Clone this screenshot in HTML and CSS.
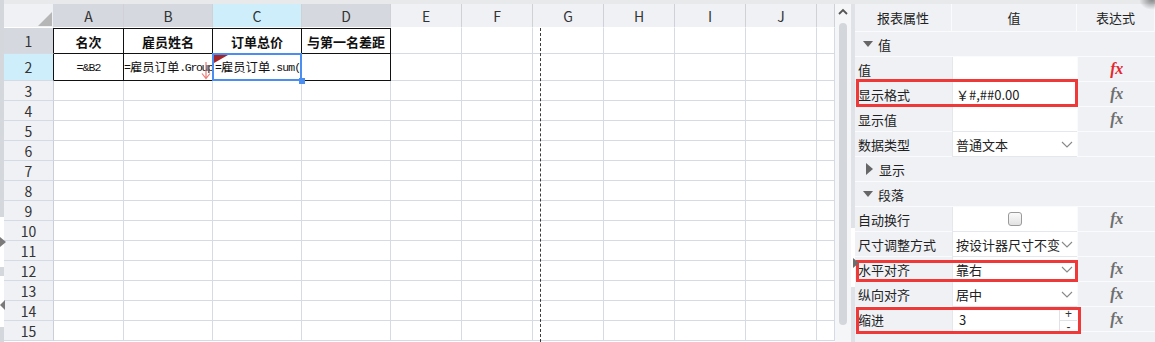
FILE: index.html
```html
<!DOCTYPE html>
<html lang="zh-CN">
<head>
<meta charset="utf-8">
<title>报表属性</title>
<link rel="stylesheet" href="styles.css">
</head>
<body>
<div class="app">
  <div class="splitter">
    <div class="seg sg1"></div>
    <div class="seg sw1"><span class="tri-r"></span></div>
    <div class="seg sg2"></div>
    <div class="seg sw2"><span class="tri-l"></span></div>
    <div class="seg sg3"></div>
  </div>

  <div class="sheet">
    <div class="row hdr">
      <div class="corner"><span class="ctri"></span></div>
      <div class="dk">A</div><div class="dk">B</div><div class="on">C</div><div class="dk">D</div>
      <div>E</div><div>F</div><div>G</div><div>H</div><div>I</div><div>J</div><div></div>
    </div>
    <div class="row r1">
      <div class="rh dk bk">1</div>
      <div class="c">名次</div><div class="c">雇员姓名</div><div class="c">订单总价</div><div class="c">与第一名差距</div>
      <div></div><div></div><div></div><div></div><div></div><div></div><div></div>
    </div>
    <div class="row r2">
      <div class="rh on bk">2</div>
      <div class="c"><span class="m">=&amp;B2</span></div>
      <div class="c left grp"><span class="m">=</span><span class="cj">雇员订单</span><span class="m tight">.Group</span><svg class="darrow" width="10" height="18" viewBox="0 0 10 18"><path d="M5 0V16M1 11.5L5 16.5L9 11.5" fill="none" stroke="#e8645f" stroke-width="1.2"/></svg></div>
      <div class="c left cur"><span class="redtri"></span><span class="m first">=</span><span class="cj">雇员订单</span><span class="m">.sum(</span><span class="selbox"></span><span class="handle"></span></div>
      <div class="c"></div>
      <div></div><div></div><div></div><div></div><div></div><div></div><div></div>
    </div>
    <div class="row"><div class="rh">3</div><div></div><div></div><div></div><div></div><div></div><div></div><div></div><div></div><div></div><div></div><div></div></div>
    <div class="row"><div class="rh">4</div><div></div><div></div><div></div><div></div><div></div><div></div><div></div><div></div><div></div><div></div><div></div></div>
    <div class="row"><div class="rh">5</div><div></div><div></div><div></div><div></div><div></div><div></div><div></div><div></div><div></div><div></div><div></div></div>
    <div class="row"><div class="rh">6</div><div></div><div></div><div></div><div></div><div></div><div></div><div></div><div></div><div></div><div></div><div></div></div>
    <div class="row"><div class="rh">7</div><div></div><div></div><div></div><div></div><div></div><div></div><div></div><div></div><div></div><div></div><div></div></div>
    <div class="row"><div class="rh">8</div><div></div><div></div><div></div><div></div><div></div><div></div><div></div><div></div><div></div><div></div><div></div></div>
    <div class="row"><div class="rh">9</div><div></div><div></div><div></div><div></div><div></div><div></div><div></div><div></div><div></div><div></div><div></div></div>
    <div class="row"><div class="rh">10</div><div></div><div></div><div></div><div></div><div></div><div></div><div></div><div></div><div></div><div></div><div></div></div>
    <div class="row"><div class="rh">11</div><div></div><div></div><div></div><div></div><div></div><div></div><div></div><div></div><div></div><div></div><div></div></div>
    <div class="row"><div class="rh">12</div><div></div><div></div><div></div><div></div><div></div><div></div><div></div><div></div><div></div><div></div><div></div></div>
    <div class="row"><div class="rh">13</div><div></div><div></div><div></div><div></div><div></div><div></div><div></div><div></div><div></div><div></div><div></div></div>
    <div class="row"><div class="rh">14</div><div></div><div></div><div></div><div></div><div></div><div></div><div></div><div></div><div></div><div></div><div></div></div>
    <div class="row"><div class="rh">15</div><div></div><div></div><div></div><div></div><div></div><div></div><div></div><div></div><div></div><div></div><div></div></div>
    <div class="pagebreak"></div>
  </div>

  <div class="vscroll">
    <svg class="up" width="10" height="7" viewBox="0 0 10 7"><path d="M1 6L5 2L9 6" fill="none" stroke="#555" stroke-width="1.8"/></svg>
    <div class="thumb"></div>
  </div>

  <div class="panel">
    <div class="pstrip">
      <div class="ps1"></div>
      <div class="ps2"><span class="ptri"></span></div>
      <div class="ps3"></div>
    </div>
    <div class="ptable">
      <div class="prow phead"><div>报表属性</div><div>值</div><div>表达式</div></div>
      <div class="psec"><span class="tdown"></span>值</div>
      <div class="prow"><div class="lbl">值</div><div class="val"></div><div class="exp"><span class="fx red">fx</span></div></div>
      <div class="prow"><div class="lbl">显示格式</div><div class="val">￥#,##0.00</div><div class="exp"><span class="fx">fx</span></div></div>
      <div class="prow"><div class="lbl">显示值</div><div class="val"></div><div class="exp"><span class="fx">fx</span></div></div>
      <div class="prow"><div class="lbl">数据类型</div><div class="val"><span class="txt">普通文本</span><svg class="chev" width="12" height="7" viewBox="0 0 12 7"><path d="M1 1L6 6L11 1" fill="none" stroke="#888" stroke-width="1.1"/></svg></div><div class="exp"></div></div>
      <div class="psec"><span class="tright"></span>显示</div>
      <div class="psec"><span class="tdown"></span>段落</div>
      <div class="prow"><div class="lbl">自动换行</div><div class="val center"><span class="check"></span></div><div class="exp"><span class="fx">fx</span></div></div>
      <div class="prow"><div class="lbl">尺寸调整方式</div><div class="val"><span class="txt">按设计器尺寸不变</span><svg class="chev" width="12" height="7" viewBox="0 0 12 7"><path d="M1 1L6 6L11 1" fill="none" stroke="#888" stroke-width="1.1"/></svg></div><div class="exp"></div></div>
      <div class="prow"><div class="lbl">水平对齐</div><div class="val"><span class="txt">靠右</span><svg class="chev" width="12" height="7" viewBox="0 0 12 7"><path d="M1 1L6 6L11 1" fill="none" stroke="#888" stroke-width="1.1"/></svg></div><div class="exp"><span class="fx">fx</span></div></div>
      <div class="prow"><div class="lbl">纵向对齐</div><div class="val"><span class="txt">居中</span><svg class="chev" width="12" height="7" viewBox="0 0 12 7"><path d="M1 1L6 6L11 1" fill="none" stroke="#888" stroke-width="1.1"/></svg></div><div class="exp"><span class="fx">fx</span></div></div>
      <div class="prow"><div class="lbl">缩进</div><div class="val num"><span class="txt">3</span><span class="spin"><span>+</span><span>-</span></span></div><div class="exp"><span class="fx">fx</span></div></div>
    </div>
    <div class="hl hl1"></div>
    <div class="hl hl2"></div>
    <div class="hl hl3"></div>
    <div class="shade"></div>
  </div>
</div>
</body>
</html>
```

FILE: styles.css
```css
* { box-sizing: border-box; margin: 0; padding: 0; }

body {
  width: 1155px;
  height: 342px;
  overflow: hidden;
  background: #e8e9eb;
  font-family: "Noto Sans CJK SC", "Noto Sans", sans-serif;
  color: #333;
}

.app {
  display: flex;
  height: 342px;
  padding-top: 4px;
}

/* left splitter */
.splitter {
  width: 4px;
  display: flex;
  flex-direction: column;
  margin-top: -4px;
  position: relative;
  z-index: 2;
}
.seg { width: 4px; }
.sg1 { height: 217px; background: #d4d7dc; }
.sw1 { height: 50px; background: #fff; display: flex; align-items: center; }
.sg2 { height: 9px; background: #d4d7dc; }
.sw2 { height: 51px; background: #fff; display: flex; align-items: center; }
.sg3 { flex: 1; background: #d4d7dc; }
.tri-r {
  width: 0; height: 0;
  border-left: 6px solid #7a7a7a;
  border-top: 5px solid transparent;
  border-bottom: 5px solid transparent;
}
.tri-l {
  width: 0; height: 0;
  margin-top: 6px;
  border-right: 5px solid #7a7a7a;
  border-top: 5px solid transparent;
  border-bottom: 5px solid transparent;
}

/* sheet */
.sheet {
  width: 831px;
  position: relative;
  background: #fff;
  overflow: hidden;
  display: flex;
  flex-direction: column;
}
.row {
  display: grid;
  grid-template-columns: 50px 70px 89px 89px 89px repeat(6, 71px) 18px;
  height: 20px;
  flex: none;
}
.row > div {
  border-right: 1px solid #d5dbe5;
  border-bottom: 1px solid #d5dbe5;
  display: flex;
  align-items: center;
  justify-content: center;
  font-size: 13px;
  overflow: hidden;
  white-space: nowrap;
  color: #222;
}
.row > .rh {
  background: #eff1f5;
  font-size: 14px;
  border-right-color: #c9ced8;
  color: #333;
}
.row > .rh.dk { background: #d5d8de; }
.row > .rh.on { background: #cdeefa; }
.row > .rh.bk { border-right-color: #111; }

.hdr { height: 24px; }
.row.hdr > div {
  background: #eff1f5;
  border-right: 1px solid #cfd1d6;
  border-bottom: 1px solid #fff;
  font-size: 14px;
  color: #333;
}
.row.hdr > .dk { background: #d5d8de; }
.row.hdr > .on { background: #cdeefa; }
.row.hdr > .corner {
  justify-content: flex-end;
  align-items: flex-end;
  padding: 0 1px 1px 0;
  border-right-color: #d5d8de;
}
.ctri {
  width: 0; height: 0;
  border-left: 14px solid transparent;
  border-bottom: 14px solid #b6b6b6;
}

.r1 { height: 26px; }
.r2 { height: 27px; }
.row > .c {
  border-right-color: #111;
  border-bottom-color: #111;
}
.r1 > .c {
  border-top: 1px solid #111;
  font-weight: bold;
  font-size: 13px;
  color: #111;
}
.row > .c.left { justify-content: flex-start; }
.row > .grp { position: relative; }
.row > .cur { overflow: visible; position: relative; }

.m {
  font-family: "Liberation Mono", monospace;
  font-size: 11.5px;
  letter-spacing: -0.9px;
  color: #111;
}
.m.tight { letter-spacing: -1.3px; }
.cj { font-size: 12.3px; color: #111; }
.darrow {
  position: absolute;
  left: 77px;
  top: 8px;
  opacity: 0.85;
}

.redtri {
  position: absolute;
  left: 1px;
  top: 1px;
  width: 0; height: 0;
  border-top: 8px solid #a3262a;
  border-right: 14px solid transparent;
}
.cur .first { margin-left: 2px; }
.selbox {
  position: absolute;
  left: -1px;
  top: -1px;
  right: -1px;
  bottom: -1px;
  border: 2px solid #4b8ef0;
  pointer-events: none;
}
.handle {
  position: absolute;
  right: -4px;
  bottom: -4px;
  width: 6px;
  height: 6px;
  background: #4b8ef0;
}

.pagebreak {
  position: absolute;
  left: 536px;
  top: 24px;
  bottom: 0;
  border-left: 1px dashed #3a3a3a;
}

/* vertical scrollbar */
.vscroll {
  width: 16px;
  background: #f5f6f8;
  display: flex;
  flex-direction: column;
  align-items: center;
}
.vscroll .up { margin-top: 4px; flex: none; }
.vscroll .thumb {
  margin-top: 8px;
  width: 8px;
  height: 302px;
  border-radius: 4px;
  background: #d3d6db;
}

/* property panel */
.panel {
  width: 304px;
  display: flex;
  background: #eff1f5;
  position: relative;
}
.pstrip {
  width: 4px;
  display: flex;
  flex-direction: column;
  position: relative;
  z-index: 1;
}
.ps1 { height: 224px; background: #dfe2e6; }
.ps2 { height: 59px; background: #fff; display: flex; align-items: center; }
.ps3 { flex: 1; background: #dfe2e6; }
.ptri {
  margin-left: 2px;
  margin-top: 10px;
  width: 0; height: 0;
  border-left: 6px solid #6d6d6d;
  border-top: 5px solid transparent;
  border-bottom: 5px solid transparent;
}

.ptable { flex: 1; font-size: 13px; color: #333; }
.prow {
  display: grid;
  grid-template-columns: 97px 125px 78px;
  height: 25px;
}
.phead { height: 28px; }
.phead > div {
  display: flex;
  align-items: center;
  justify-content: center;
  border-right: 1px solid #fafbfc;
  border-bottom: 1px solid #fafbfc;
  color: #222;
}
.psec {
  height: 25px;
  display: flex;
  align-items: center;
  padding-left: 8px;
  border-bottom: 1px solid #fafbfc;
  color: #222;
}
.tdown {
  width: 0; height: 0;
  margin-right: 5px;
  border-top: 6px solid #666;
  border-left: 5px solid transparent;
  border-right: 5px solid transparent;
}
.tright {
  width: 0; height: 0;
  margin-left: 3px;
  margin-right: 6px;
  border-left: 7px solid #666;
  border-top: 6px solid transparent;
  border-bottom: 6px solid transparent;
}
.lbl {
  display: flex;
  align-items: center;
  padding-left: 3px;
  border-bottom: 1px solid #fafbfc;
  color: #222;
  white-space: nowrap;
}
.val {
  background: #fff;
  border-left: 1px solid #e4e7eb;
  border-bottom: 1px solid #e4e7eb;
  display: flex;
  align-items: center;
  padding-left: 3px;
  padding-right: 4px;
  color: #222;
  white-space: nowrap;
  overflow: hidden;
}
.val.center { justify-content: center; padding: 0; }
.val.num { padding-left: 6px; padding-right: 0; }
.txt { overflow: hidden; flex: 0 1 auto; }
.chev { margin-left: auto; flex: none; }
.exp {
  display: flex;
  align-items: center;
  justify-content: center;
  border-left: 1px solid #fafbfc;
  border-bottom: 1px solid #fafbfc;
}
.fx {
  font-family: "Liberation Serif", "DejaVu Serif", serif;
  font-style: italic;
  font-weight: bold;
  font-size: 16px;
  color: #6e6e6e;
  letter-spacing: -0.5px;
}
.fx.red { color: #e5262d; }

.check {
  width: 14px;
  height: 14px;
  border: 1px solid #9a9a9a;
  border-radius: 3px;
  background: linear-gradient(#fbfbfb, #e2e2e2);
}
.spin {
  margin-left: auto;
  width: 18px;
  height: 23px;
  display: flex;
  flex-direction: column;
  border-left: 1px solid #e0e2e6;
}
.spin span {
  flex: 1;
  display: flex;
  align-items: center;
  justify-content: center;
  font-family: "Liberation Sans", sans-serif;
  font-size: 12px;
  line-height: 1;
  color: #333;
}
.spin span + span { border-top: 1px solid #e0e2e6; }

.hl {
  position: absolute;
  border: 3px solid #ef3838;
  pointer-events: none;
}
.hl1 { left: 5px; top: 75px; width: 222px; height: 28px; }
.hl2 { left: 5px; top: 256px; width: 222px; height: 22px; }
.hl3 { left: 5px; top: 303px; width: 225px; height: 27px; }

.shade {
  position: absolute;
  right: -10px;
  top: -14px;
  width: 26px;
  height: 20px;
  border-radius: 50%;
  background: radial-gradient(rgba(60,60,60,0.55), rgba(60,60,60,0) 70%);
}
```
